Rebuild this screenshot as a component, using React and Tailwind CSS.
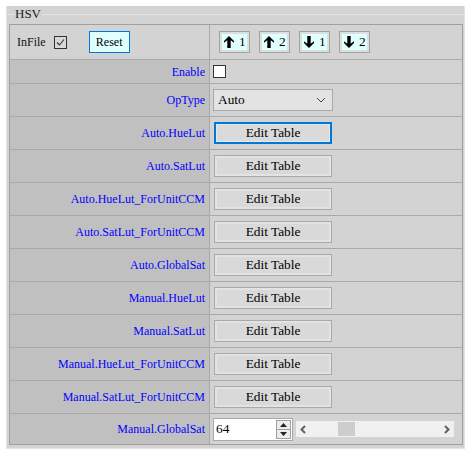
import React from "react";

const serif = { fontFamily: '"Liberation Serif", "Times New Roman", serif' };

function ArrowIcon({ down }) {
  return (
    <svg width="10" height="12" viewBox="0 0 10 12" className={down ? "rotate-180" : ""}>
      <polygon points="5,0 10,5 10,6.8 6.7,4.2 6.7,12 3.3,12 3.3,4.2 0,6.8 0,5" fill="#000" />
    </svg>
  );
}

function ArrowButton({ down, n }) {
  return (
    <div className="w-[31px] h-[22px] border border-[#a3a3a3] bg-[#dedede] p-[2px]">
      <div className="w-full h-full bg-[#e0ffff] flex items-center pl-[2px] gap-[5px]">
        <ArrowIcon down={down} />
        <span className="text-[13.33px] leading-none text-black">{n}</span>
      </div>
    </div>
  );
}

function EditButton({ focused }) {
  return (
    <div
      className={
        "ml-[1px] w-[118px] h-[22px] flex items-center justify-center text-[13.33px] text-black leading-none " +
        (focused
          ? "border-2 border-[#0078d7] bg-[#dadada] shadow-[inset_0_0_0_1px_#e8e8e8]"
          : "border border-[#a9a9a9] bg-[#d9d9d9] shadow-[inset_0_0_0_2px_#e3e3e3]")
      }
    >
      Edit Table
    </div>
  );
}

function Label({ children }) {
  return (
    <div className="w-[200px] shrink-0 bg-[#c0c0c0] border-r border-[#a9a9a9] flex items-center justify-end pr-[4px] text-[12px] text-[#0000ff]">
      {children}
    </div>
  );
}

function Row({ label, h, last, children }) {
  return (
    <div className={"flex " + (last ? "" : "border-b border-[#a9a9a9] ") + h}>
      <Label>{label}</Label>
      <div className="flex-1 flex items-center pl-[3px]">{children}</div>
    </div>
  );
}

export default function App() {
  const editRows = [
    "Auto.HueLut",
    "Auto.SatLut",
    "Auto.HueLut_ForUnitCCM",
    "Auto.SatLut_ForUnitCCM",
    "Auto.GlobalSat",
    "Manual.HueLut",
    "Manual.SatLut",
    "Manual.HueLut_ForUnitCCM",
    "Manual.SatLut_ForUnitCCM",
  ];
  return (
    <div className="w-[470px] h-[453px] bg-white pt-[6px] pl-[6px]" style={serif}>
      <div className="relative w-[459px] h-[443px] bg-[#d3d3d3] border-x border-b border-[#e2e2e2] pt-[18px] pl-[2px]">
        <div className="absolute left-0 right-0 top-[8px] h-px bg-[#e2e2e2]" />
        <div className="absolute left-[7px] top-[1px] px-[1px] bg-[#d3d3d3] text-[13px] leading-[14px] text-[#222]">HSV</div>

        <div className="w-[454px] border border-[#a0a0a0] flex flex-col">
          <div className="flex h-[35px] border-b border-[#a9a9a9]">
            <div className="w-[200px] shrink-0 border-r border-[#a9a9a9] flex items-center pl-[7px] text-[12px] text-[#111]">
              <span>InFile</span>
              <div className="ml-[8px] w-[13px] h-[13px] border border-[#333] bg-[#d8d8d8] flex items-center justify-center">
                <svg width="11" height="11" viewBox="0 0 11 11">
                  <polyline points="2,5.5 4.5,8 9,2.5" fill="none" stroke="#333" strokeWidth="1.1" />
                </svg>
              </div>
              <div className="ml-[22px] w-[41px] h-[22px] border border-[#0078d7] bg-[#e0ffff] flex items-center justify-center text-[12px] text-black">
                Reset
              </div>
            </div>
            <div className="flex-1 flex items-center pl-[9px] gap-[9px]">
              <ArrowButton n="1" />
              <ArrowButton n="2" />
              <ArrowButton down n="1" />
              <ArrowButton down n="2" />
            </div>
          </div>

          <Row label="Enable" h="h-[24px]">
            <div className="w-[13px] h-[13px] border border-[#333] bg-white" />
          </Row>

          <Row label="OpType" h="h-[33px]">
            <div className="w-[120px] h-[22px] border border-[#a9a9a9] bg-[#e3e3e3] flex items-center justify-between pl-[4px] pr-[6px]">
              <span className="text-[13.33px] text-black leading-none">Auto</span>
              <svg width="10" height="6" viewBox="0 0 10 6">
                <polyline points="1,1 5,5 9,1" fill="none" stroke="#444" strokeWidth="1" />
              </svg>
            </div>
          </Row>

          {editRows.map((l, i) => (
            <Row key={l} label={l} h="h-[33px]">
              <EditButton focused={i === 0} />
            </Row>
          ))}

          <Row label="Manual.GlobalSat" h="h-[30px]" last>
            <div className="w-[80px] h-[23px] border border-[#a9a9a9] bg-white flex items-stretch">
              <div className="flex-1 flex items-start pt-[3px] pl-[2px] text-[13.33px] text-black leading-none">64</div>
              <div className="w-[15px] my-[1px] mr-[1px] flex flex-col border border-[#a0a0a0]">
                <div className="flex-1 bg-[#ececec] flex items-center justify-center border-b border-[#a0a0a0]">
                  <svg width="7" height="4" viewBox="0 0 7 4"><polygon points="3.5,0 7,4 0,4" fill="#222" /></svg>
                </div>
                <div className="flex-1 bg-[#ececec] flex items-center justify-center">
                  <svg width="7" height="4" viewBox="0 0 7 4"><polygon points="0,0 7,0 3.5,4" fill="#222" /></svg>
                </div>
              </div>
            </div>
            <div className="ml-[3px] w-[158px] h-[16px] bg-[#f0f0f0] relative flex items-center justify-between px-[4px]">
              <svg width="6" height="9" viewBox="0 0 6 9"><polyline points="5,1 1.5,4.5 5,8" fill="none" stroke="#606060" strokeWidth="2" /></svg>
              <div className="absolute left-[42px] top-[1px] w-[17px] h-[14px] bg-[#cdcdcd]" />
              <svg width="6" height="9" viewBox="0 0 6 9"><polyline points="1,1 4.5,4.5 1,8" fill="none" stroke="#606060" strokeWidth="2" /></svg>
            </div>
          </Row>
        </div>
      </div>
    </div>
  );
}
